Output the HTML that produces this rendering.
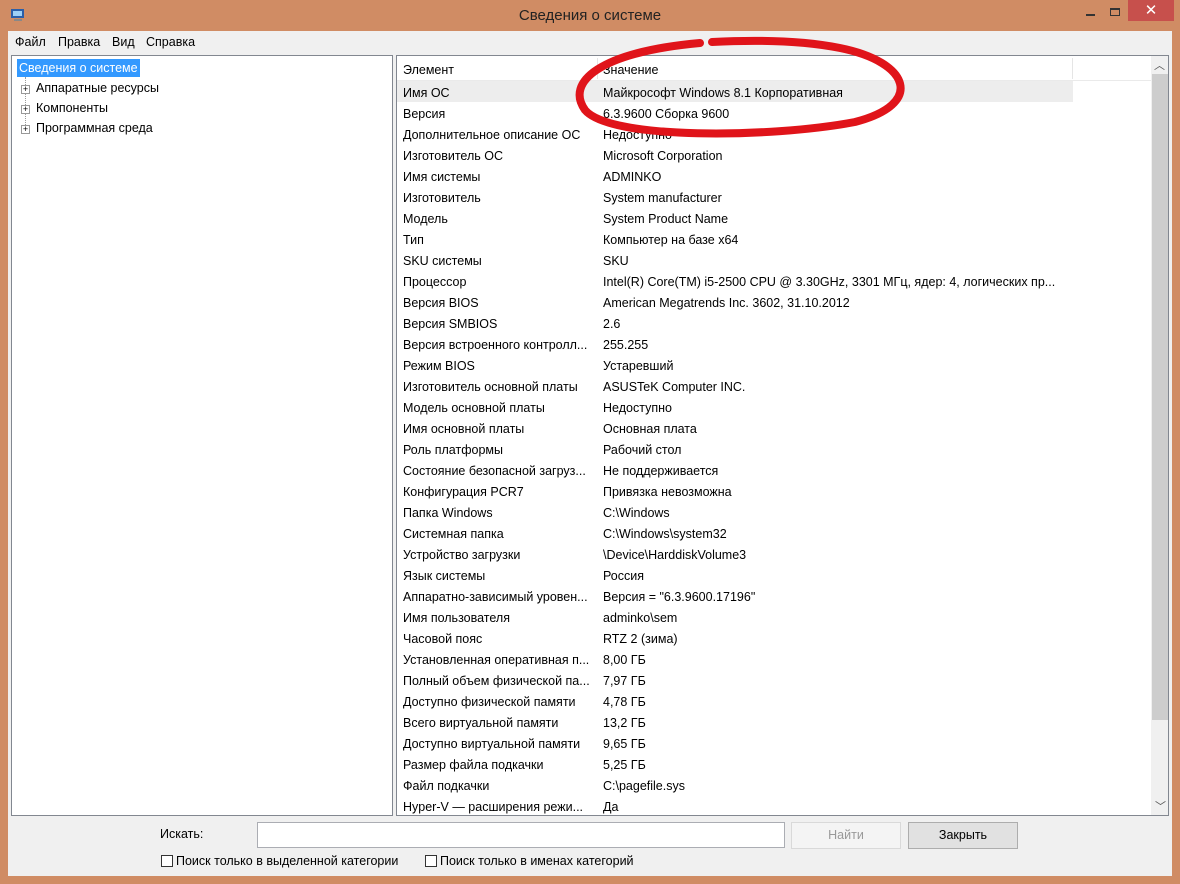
<!DOCTYPE html>
<html><head><meta charset="utf-8"><style>
*{margin:0;padding:0;box-sizing:border-box}
body{width:1180px;height:884px;background:#d08c64;font-family:"Liberation Sans",sans-serif;font-size:12.5px;color:#000;position:relative;overflow:hidden}
.abs{position:absolute}
.title{left:0;top:7px;width:1180px;text-align:center;font-size:15px;color:#222}
.client{left:8px;top:31px;width:1164px;height:845px;background:#f0f0f0}
.menu span{position:absolute;top:36px;font-size:12.5px;line-height:1}
.pane{background:#fff;border:1px solid #828790}
.row{position:absolute;left:0;height:21px;line-height:21px;white-space:nowrap}
.row .a{position:absolute;left:6px}
.row .b{position:absolute;left:206px}
.btn{border:1px solid #adadad;background:#e1e1e1;text-align:center;line-height:25px;font-size:12.5px}
.cb{width:12px;height:12px;border:1px solid #333;background:#fff;display:inline-block;vertical-align:-2px;margin-right:3px}
</style></head><body>
<div class="abs title">Сведения о системе</div>
<svg class="abs" style="left:10px;top:7px" width="16" height="16"><rect x="1" y="2" width="13" height="9" fill="#2b5fa8"/><rect x="3" y="4" width="9" height="5" fill="#9ed0f5"/><rect x="4" y="12" width="8" height="2" fill="#888"/></svg>
<div class="abs" style="left:1086px;top:14px;width:9px;height:2px;background:#333"></div>
<div class="abs" style="left:1110px;top:8px;width:10px;height:8px;border:1px solid #333;border-top-width:2px"></div>
<div class="abs" style="left:1128px;top:0;width:46px;height:21px;background:#c7504c;color:#fff;text-align:center;font-size:15px;line-height:21px">✕</div>
<div class="abs client"></div>
<div class="menu"><span style="left:15px">Файл</span><span style="left:58px">Правка</span><span style="left:112px">Вид</span><span style="left:146px">Справка</span></div>
<div class="abs pane" style="left:11px;top:55px;width:382px;height:761px">
<div class="abs" style="left:5px;top:3px;background:#3399ff;color:#fff;padding:0 2px;height:18px;line-height:18px">Сведения о системе</div>
<div class="abs" style="left:13px;top:21px;height:56px;border-left:1px dotted #999"></div>
<div class="abs" style="left:9px;top:22px;line-height:20px">
<div><span style="display:inline-block;width:9px;height:9px;border:1px solid #999;background:#fff;font-size:9px;line-height:7px;text-align:center;margin-right:6px">+</span>Аппаратные ресурсы</div>
<div><span style="display:inline-block;width:9px;height:9px;border:1px solid #999;background:#fff;font-size:9px;line-height:7px;text-align:center;margin-right:6px">+</span>Компоненты</div>
<div><span style="display:inline-block;width:9px;height:9px;border:1px solid #999;background:#fff;font-size:9px;line-height:7px;text-align:center;margin-right:6px">+</span>Программная среда</div>
</div></div>
<div class="abs pane" style="left:396px;top:55px;width:773px;height:761px;overflow:hidden">
<div class="abs" style="left:0;top:25px;width:676px;height:21px;background:#ededed"></div>
<div class="abs" style="left:200px;top:2px;width:1px;height:21px;background:#e5e5e5"></div>
<div class="abs" style="left:675px;top:2px;width:1px;height:21px;background:#e5e5e5"></div>
<div class="abs" style="left:0;top:24px;width:754px;height:1px;background:#eaeaea"></div>
<div class="abs" style="left:754px;top:0;width:18px;height:760px;background:#f0f0f0"></div>
<div class="abs" style="left:755px;top:18px;width:16px;height:646px;background:#cdcdcd"></div>
<div class="abs" style="left:757px;top:1px;font-size:11px;color:#555">︿</div>
<div class="abs" style="left:758px;top:742px;font-size:11px;color:#555">﹀</div>
<div id="rows"></div>
</div>
<div class="abs" style="left:160px;top:827px">Искать:</div>
<div class="abs" style="left:257px;top:822px;width:528px;height:26px;background:#fff;border:1px solid #abadb3"></div>
<div class="abs btn" style="left:791px;top:822px;width:110px;height:27px;color:#999;background:#f4f4f4;border-color:#d9d9d9">Найти</div>
<div class="abs btn" style="left:908px;top:822px;width:110px;height:27px">Закрыть</div>
<div class="abs" style="left:161px;top:854px"><span class="cb"></span>Поиск только в выделенной категории</div>
<div class="abs" style="left:425px;top:854px"><span class="cb"></span>Поиск только в именах категорий</div>
<svg class="abs" style="left:0;top:0" width="1180" height="884">
<path d="M700 43 C 600 52, 565 82, 585 110 C 610 140, 770 138, 855 122 C 925 104, 910 62, 840 48 C 800 40, 750 40, 712 42" fill="none" stroke="#e0141a" stroke-width="8" stroke-linecap="round"/>
</svg>
<script>
var d=[["Элемент","Значение"],["Имя ОС","Майкрософт Windows 8.1 Корпоративная"],["Версия","6.3.9600 Сборка 9600"],["Дополнительное описание ОС","Недоступно"],["Изготовитель ОС","Microsoft Corporation"],["Имя системы","ADMINKO"],["Изготовитель","System manufacturer"],["Модель","System Product Name"],["Тип","Компьютер на базе x64"],["SKU системы","SKU"],["Процессор","Intel(R) Core(TM) i5-2500 CPU @ 3.30GHz, 3301 МГц, ядер: 4, логических пр..."],["Версия BIOS","American Megatrends Inc. 3602, 31.10.2012"],["Версия SMBIOS","2.6"],["Версия встроенного контролл...","255.255"],["Режим BIOS","Устаревший"],["Изготовитель основной платы","ASUSTeK Computer INC."],["Модель основной платы","Недоступно"],["Имя основной платы","Основная плата"],["Роль платформы","Рабочий стол"],["Состояние безопасной загруз...","Не поддерживается"],["Конфигурация PCR7","Привязка невозможна"],["Папка Windows","C:\\Windows"],["Системная папка","C:\\Windows\\system32"],["Устройство загрузки","\\Device\\HarddiskVolume3"],["Язык системы","Россия"],["Аппаратно-зависимый уровен...","Версия = \"6.3.9600.17196\""],["Имя пользователя","adminko\\sem"],["Часовой пояс","RTZ 2 (зима)"],["Установленная оперативная п...","8,00 ГБ"],["Полный объем физической па...","7,97 ГБ"],["Доступно физической памяти","4,78 ГБ"],["Всего виртуальной памяти","13,2 ГБ"],["Доступно виртуальной памяти","9,65 ГБ"],["Размер файла подкачки","5,25 ГБ"],["Файл подкачки","C:\\pagefile.sys"],["Hyper-V — расширения режи...","Да"]];
var h="";d.forEach(function(r,i){h+='<div class="row" style="top:'+(4+i*21+(i?2:0))+'px"><span class="a">'+r[0].replace(/</g,"&lt;")+'</span><span class="b">'+r[1]+'</span></div>';});
document.getElementById("rows").innerHTML=h;
</script>
</body></html>
